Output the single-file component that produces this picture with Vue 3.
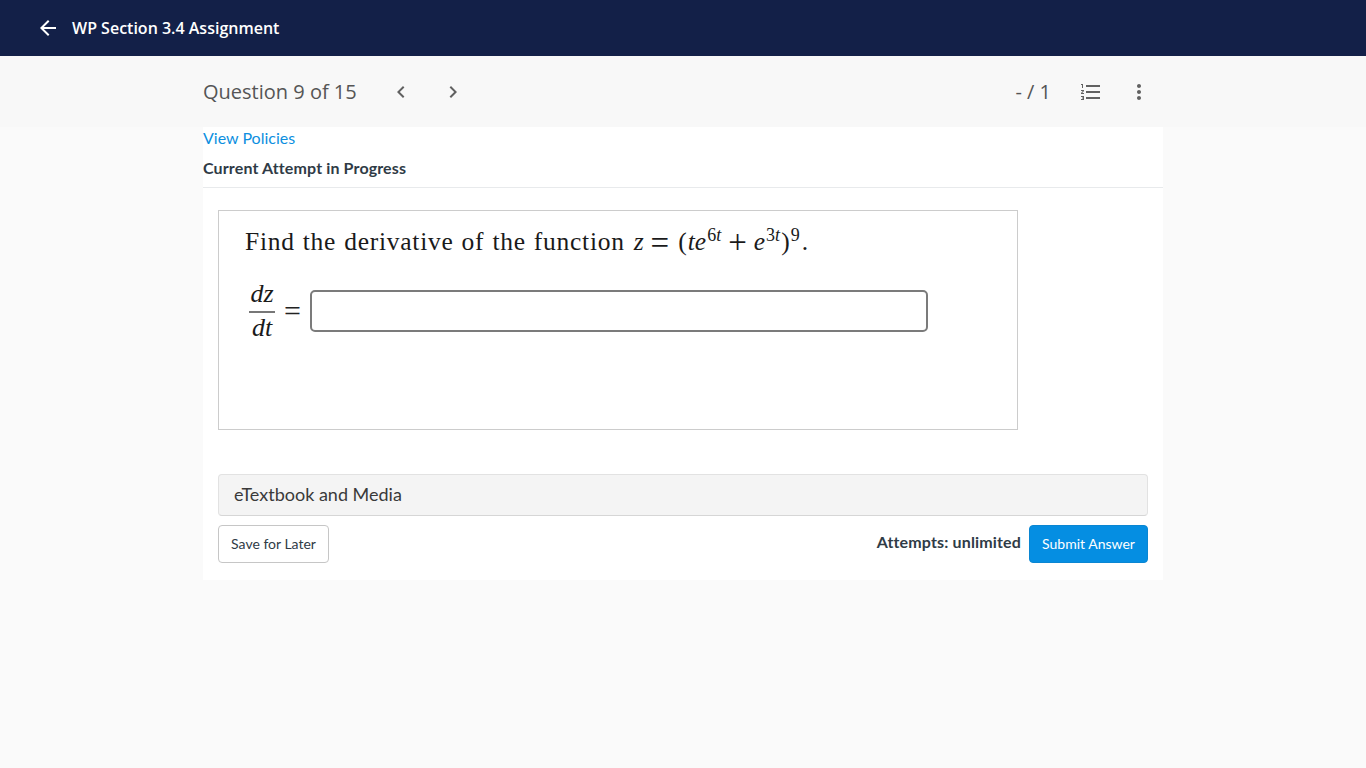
<script setup>
const title = 'WP Section 3.4 Assignment'
</script>

<template>
  <div class="page">
    <header class="topbar">
      <svg class="back" width="24" height="24" viewBox="0 0 24 24"><path d="M20 11H7.830l5.590-5.590L12 4l-8 8 8 8 1.410-1.410L7.830 13H20z" fill="#fff"/></svg>
      <span class="title">{{ title }}</span>
    </header>
    <div class="qbar">
      <div class="qbar-inner">
        <span class="qnum">Question 9 of 15</span>
        <button class="nav nav-first" aria-label="Previous">
          <svg width="24" height="24" viewBox="0 0 24 24"><path d="M15.410 7.410 14 6l-6 6 6 6 1.410-1.410L10.830 12z" fill="#616161"/></svg>
        </button>
        <button class="nav" aria-label="Next">
          <svg width="24" height="24" viewBox="0 0 24 24"><path d="M8.590 16.590 10 18l6-6-6-6-1.410 1.410L13.170 12z" fill="#616161"/></svg>
        </button>
        <span class="score">- / 1</span>
        <svg class="list" width="24" height="24" viewBox="0 0 24 24"><path d="M2 17h2v.5H3v1h1v.5H2v1h3v-4H2zm1-9h1V4H2v1h1zm-1 3h1.800L2 13.100v.9h3v-1H3.200L5 10.900V10H2zm5-6v2h14V5zm0 14h14v-2H7zm0-6h14v-2H7z" fill="#616161"/></svg>
        <svg class="more" width="24" height="24" viewBox="0 0 24 24"><path d="M12 8c1.100 0 2-.9 2-2s-.9-2-2-2-2 .9-2 2 .9 2 2 2zm0 2c-1.100 0-2 .9-2 2s.9 2 2 2 2-.9 2-2-.9-2-2-2zm0 6c-1.100 0-2 .9-2 2s.9 2 2 2 2-.9 2-2-.9-2-2-2z" fill="#616161"/></svg>
      </div>
    </div>
    <main class="card">
      <a class="policies">View Policies</a>
      <div class="attempt">Current Attempt in Progress</div>
      <div class="body">
        <section class="question">
          <p class="prompt"><span class="words">Find the derivative of the function</span><i class="z">z</i><span class="eq">=</span><span class="open">(</span><i class="te">te</i><sup class="s1">6<i>t</i></sup><span class="plus">+</span><i class="e">e</i><sup class="s2">3<i>t</i></sup><span class="close">)</span><sup class="s3">9</sup><span class="dot">.</span></p>
          <div class="answer">
            <span class="frac"><i class="top">dz</i><i class="bottom">dt</i></span>
            <span class="equals">=</span>
            <input class="field" type="text" aria-label="Answer" />
          </div>
        </section>
        <div class="media">eTextbook and Media</div>
        <div class="actions">
          <button class="save">Save for Later</button>
          <span class="attempts">Attempts: unlimited</span>
          <button class="submit">Submit Answer</button>
        </div>
      </div>
    </main>
  </div>
</template>

<style scoped>
.page { min-height: 768px; background: #fafafa; font-family: Lato, sans-serif; color: #2f3b46; }
.topbar { height: 56px; background: #132048; display: flex; align-items: center; padding-left: 36px; box-sizing: border-box; }
.back { flex: none; }
.title { margin-left: 12px; color: #fff; font: 600 16px/24px "Open Sans", sans-serif; }
.qbar { height: 71px; background: #f8f8f8; }
.qbar-inner { width: 960px; height: 71px; margin-left: 203px; padding-top: 1px; box-sizing: border-box; display: flex; align-items: center; }
.qnum { font: 400 20px/28px "Open Sans", sans-serif; color: #555; width: 156px; flex: none; }
.nav { width: 24px; height: 24px; padding: 0; margin: 0; border: 0; background: none; display: block; margin-left: 28px; }
.nav-first { margin-left: 30px; }
.nav svg { display: block; }
.score { margin-left: auto; font: 400 20px/28px "Open Sans", sans-serif; color: #555; }
.list { margin-left: 28px; flex: none; }
.more { margin-left: 24px; margin-right: 12px; flex: none; }
.card { width: 960px; height: 453px; margin-left: 203px; background: #fff; box-sizing: border-box; }
.policies { display: block; height: 22px; font-size: 16px; line-height: 22px; color: #0d8fe0; }
.attempt { height: 39px; box-sizing: border-box; border-bottom: 1px solid #e8eaec; padding-top: 8px; font-size: 16px; font-weight: 700; letter-spacing: 0.13px; line-height: 22px; color: #2f3b46; }
.body { padding: 22px 15px 0; }
.question { width: 800px; height: 220px; box-sizing: border-box; border: 1px solid #ccc; padding: 14px 26px 0; font-family: "Liberation Serif", serif; color: #1a1a1a; }
.prompt { margin: 0; font-size: 25.5px; line-height: 34px; white-space: nowrap; }
.words { letter-spacing: 0.73px; word-spacing: 1px; }
.prompt sup { font-size: 18px; line-height: 0; vertical-align: 9px; }
.z { margin-left: 9px; }
.eq { margin-left: 7px; font-size: 33px; line-height: 0; vertical-align: -4px; }
.open { margin-left: 9px; }
.te { margin-left: 1px; }
.prompt .s1 { margin-left: 1px; }
.plus { margin-left: 7px; font-size: 33px; line-height: 0; vertical-align: -3px; }
.e { margin-left: 7px; }
.prompt .s2 { margin-left: 1px; }
.close { margin-left: 1px; }
.prompt .s3 { margin-left: 1px; }
.dot { margin-left: 2px; }
.answer { display: flex; align-items: center; margin-top: 20px; }
.frac { display: flex; flex-direction: column; align-items: center; width: 26px; margin-left: 4px; font-size: 26px; line-height: 30px; }
.top { display: block; width: 100%; text-align: center; border-bottom: 2px solid #777; padding-bottom: 2px; }
.bottom { display: block; }
.equals { margin-left: 9px; font-size: 30px; line-height: 30px; width: 19px; color: #222; }
.field { width: 618px; height: 42px; margin-left: 7px; box-sizing: border-box; border: 2px solid #7b7b7b; border-radius: 5px; background: #fff; padding: 0; outline: 0; }
.media { width: 930px; height: 42px; margin-top: 44px; box-sizing: border-box; border: 1px solid #e2e2e2; border-bottom: 1px solid #d6d6d6; border-radius: 4px; background: #f4f4f4; padding-left: 15px; font-size: 18px; line-height: 39px; color: #3a3a3a; }
.actions { width: 930px; display: flex; align-items: center; margin-top: 9px; }
.save { width: 111px; height: 38px; padding: 0 0 2px; box-sizing: border-box; background: #fff; border: 1px solid #c6c6c6; border-radius: 4px; font: 400 14px Lato, sans-serif; color: #2f3b46; }
.attempts { margin-left: auto; margin-right: 8px; font-size: 16px; font-weight: 700; letter-spacing: 0.15px; line-height: 22px; position: relative; top: -2px; color: #2f3b46; }
.submit { width: 119px; height: 38px; padding: 0 0 2px; background: #058ee2; border: 1px solid #0a86d2; border-radius: 4px; font: 400 14px Lato, sans-serif; color: #fff; }
</style>

<style>
html, body { margin: 0; background: #fafafa; }
</style>
